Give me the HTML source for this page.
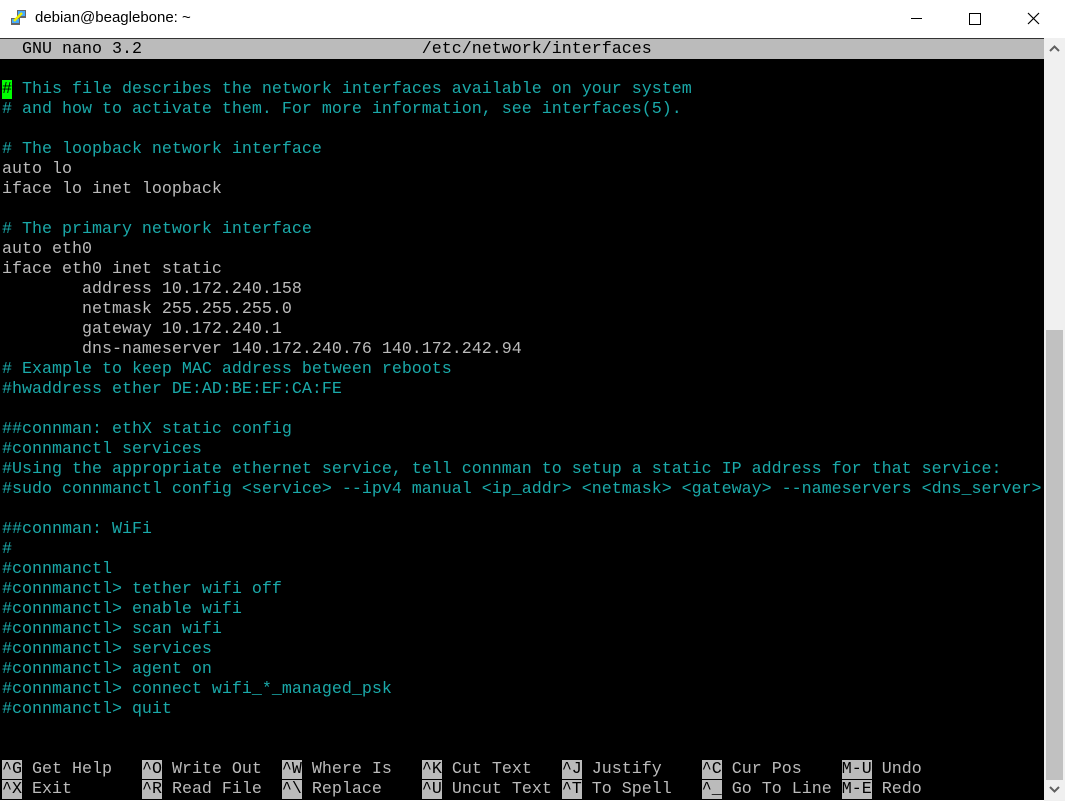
<!DOCTYPE html>
<html><head><style>
html,body{margin:0;padding:0;width:1065px;height:801px;overflow:hidden;background:#fff;font-family:"Liberation Sans",sans-serif}
#title{position:absolute;left:0;top:0;width:1065px;height:38px;background:#fff}
#title .t{position:absolute;left:35px;top:9px;font-size:15px;color:#000}
#term{position:absolute;left:0;top:38px;width:1044px;height:761px;background:#000;border-top:1px solid #333;overflow:hidden}
pre{margin:0;position:absolute;left:2px;top:1px;font-family:"Liberation Mono",monospace;font-size:16.67px;line-height:20px;color:#bbb;white-space:pre}
.c{color:#1aa9a9}
.k{background:#bbb;color:#000}
#hdr{position:absolute;left:0;top:0;width:1044px;height:20px;background:#bbb}
#sb{position:absolute;left:1044px;top:38px;width:21px;height:763px;background:#f0f0f0}
#thumb{position:absolute;left:1046px;top:330px;width:17px;height:450px;background:#c1c1c1}
</style></head><body>
<div id="title">
<svg style="position:absolute;left:10px;top:9px" width="18" height="18" viewBox="0 0 18 18"><rect x="1" y="9" width="9" height="7" fill="#666"/><rect x="2" y="10" width="7" height="4" fill="#4af"/><rect x="7" y="1" width="9" height="8" fill="#666"/><rect x="8" y="2" width="7" height="5" fill="#4af"/><path d="M4 12 L12 4" stroke="#ee0" stroke-width="2.5"/></svg>
<div class="t">debian@beaglebone: ~</div>
<div style="position:absolute;left:911px;top:18px;width:11px;height:1px;background:#000"></div>
<div style="position:absolute;left:969px;top:13px;width:10px;height:10px;border:1px solid #000"></div>
<svg style="position:absolute;left:1027px;top:12px" width="13" height="13"><path d="M1 1L12 12M12 1L1 12" stroke="#000" stroke-width="1.2"/></svg>
</div>
<div id="term">
<div id="hdr"></div>
<pre><span style="color:#000">  GNU nano 3.2                            /etc/network/interfaces</span>

<span style="background:#0f0;color:#000">#</span><span class="c"> This file describes the network interfaces available on your system</span>
<span class="c"># and how to activate them. For more information, see interfaces(5).</span>

<span class="c"># The loopback network interface</span>
auto lo
iface lo inet loopback

<span class="c"># The primary network interface</span>
auto eth0
iface eth0 inet static
        address 10.172.240.158
        netmask 255.255.255.0
        gateway 10.172.240.1
        dns-nameserver 140.172.240.76 140.172.242.94
<span class="c"># Example to keep MAC address between reboots</span>
<span class="c">#hwaddress ether DE:AD:BE:EF:CA:FE</span>

<span class="c">##connman: ethX static config</span>
<span class="c">#connmanctl services</span>
<span class="c">#Using the appropriate ethernet service, tell connman to setup a static IP address for that service:</span>
<span class="c">#sudo connmanctl config &lt;service&gt; --ipv4 manual &lt;ip_addr&gt; &lt;netmask&gt; &lt;gateway&gt; --nameservers &lt;dns_server&gt;</span>

<span class="c">##connman: WiFi</span>
<span class="c">#</span>
<span class="c">#connmanctl</span>
<span class="c">#connmanctl&gt; tether wifi off</span>
<span class="c">#connmanctl&gt; enable wifi</span>
<span class="c">#connmanctl&gt; scan wifi</span>
<span class="c">#connmanctl&gt; services</span>
<span class="c">#connmanctl&gt; agent on</span>
<span class="c">#connmanctl&gt; connect wifi_*_managed_psk</span>
<span class="c">#connmanctl&gt; quit</span>


<span class="k">^G</span> Get Help   <span class="k">^O</span> Write Out  <span class="k">^W</span> Where Is   <span class="k">^K</span> Cut Text   <span class="k">^J</span> Justify    <span class="k">^C</span> Cur Pos    <span class="k">M-U</span> Undo
<span class="k">^X</span> Exit       <span class="k">^R</span> Read File  <span class="k">^\</span> Replace    <span class="k">^U</span> Uncut Text <span class="k">^T</span> To Spell   <span class="k">^_</span> Go To Line <span class="k">M-E</span> Redo</pre>
</div>
<div id="sb"></div>
<div id="thumb"></div>
<svg style="position:absolute;left:1048px;top:44px" width="13" height="10"><path d="M2 7L6.5 2.5L11 7" stroke="#606060" stroke-width="2" fill="none"/></svg>
<svg style="position:absolute;left:1048px;top:784px" width="13" height="10"><path d="M2 3L6.5 7.5L11 3" stroke="#606060" stroke-width="2" fill="none"/></svg>
</body></html>
